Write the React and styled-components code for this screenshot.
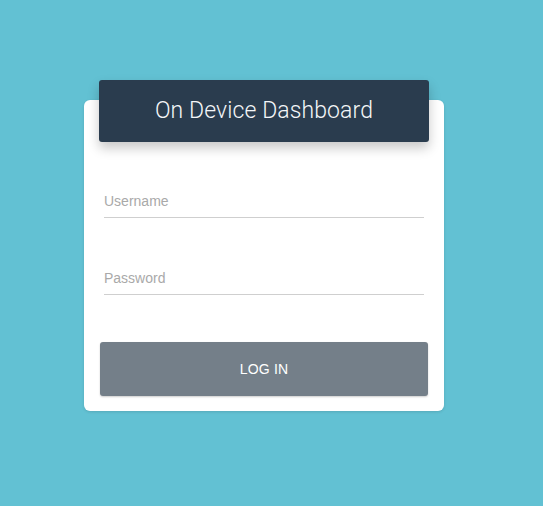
import React from "react";
import styled, { createGlobalStyle } from "styled-components";

const GlobalStyle = createGlobalStyle`
  html, body {
    margin: 0;
    padding: 0;
    background: #62c1d3;
    font-family: "Liberation Sans", Arial, sans-serif;
  }
`;

const Page = styled.div`
  width: 543px;
  height: 506px;
  padding: 100px 0 0 84px;
  box-sizing: border-box;
`;

const Card = styled.form`
  width: 360px;
  height: 311px;
  box-sizing: border-box;
  background: #fff;
  border-radius: 6px;
  padding: 0 16px 15px 16px;
  display: flex;
  flex-direction: column;
  box-shadow: 0 1px 3px rgba(0, 0, 0, 0.12);
`;

const Header = styled.div`
  margin: -20px -1px 0 -1px;
  height: 62px;
  padding-bottom: 2px;
  box-sizing: border-box;
  background: #2a3c4e;
  border-radius: 3px;
  display: flex;
  align-items: center;
  justify-content: center;
  box-shadow: 0 6px 12px rgba(0, 0, 0, 0.22);
`;

const Title = styled.h1`
  margin: 0;
  font-family: Roboto, "Liberation Sans", sans-serif;
  font-weight: 300;
  font-size: 23px;
  color: #f4f6f8;
  letter-spacing: 0.1px;
`;

const Fields = styled.div`
  display: flex;
  flex-direction: column;
  gap: 43px;
  padding: 42px 4px 0 4px;
`;

const Input = styled.input`
  border: none;
  border-bottom: 1px solid #cfcfcf;
  outline: none;
  height: 33px;
  padding: 0;
  font-family: "Liberation Sans", Arial, sans-serif;
  font-size: 14px;
  color: #333;
  background: transparent;
  &::placeholder {
    color: #a9a9a9;
  }
`;

const Button = styled.button`
  margin-top: auto;
  height: 54px;
  border: none;
  border-radius: 3px;
  background: #747f89;
  color: #fff;
  font-family: "Liberation Sans", Arial, sans-serif;
  font-size: 14px;
  letter-spacing: 0.2px;
  box-shadow: 0 1px 2px rgba(0, 0, 0, 0.2);
  cursor: pointer;
`;

export default function App() {
  return (
    <Page>
      <GlobalStyle />
      <Card onSubmit={(e) => e.preventDefault()}>
        <Header>
          <Title>On Device Dashboard</Title>
        </Header>
        <Fields>
          <Input type="text" placeholder="Username" />
          <Input type="password" placeholder="Password" />
        </Fields>
        <Button type="submit">LOG IN</Button>
      </Card>
    </Page>
  );
}
